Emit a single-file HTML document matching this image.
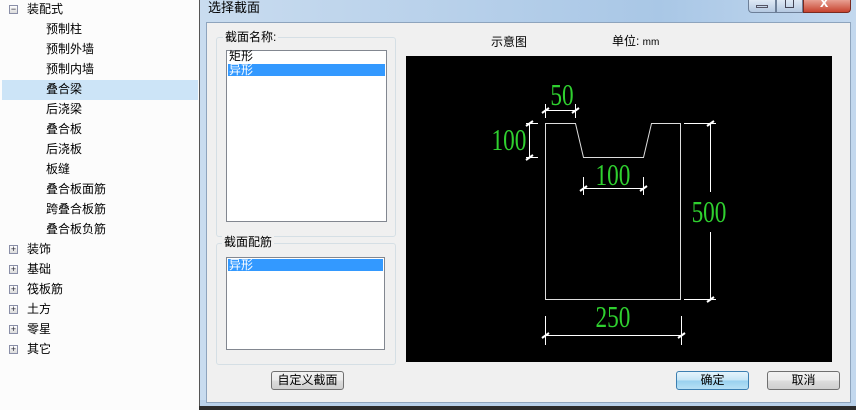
<!DOCTYPE html>
<html><head><meta charset="utf-8"><style>
*{margin:0;padding:0;box-sizing:border-box}
body{width:856px;height:410px;overflow:hidden;background:#fff;font-family:"Liberation Sans","Noto Sans CJK SC",sans-serif;font-size:12px;color:#000;position:relative}
.a{position:absolute}
.t{position:absolute;height:20px;line-height:20px;white-space:nowrap}
.pm{position:absolute;width:9px;height:9px;border:1px solid #8a8fa8;background:linear-gradient(#fff,#dcdcdc);font-size:9px;line-height:7px;text-align:center;color:#223}
.btn{position:absolute;height:19px;border:1px solid #707070;border-radius:3px;background:linear-gradient(#f2f2f2 0,#ebebeb 50%,#dddddd 51%,#cfcfcf);text-align:center;line-height:17px;font-size:12px}
.grp{position:absolute;border:1px solid #d5dfe5;border-radius:3px}
.lbl{position:absolute;background:#f0f0f0;padding:0 2px;line-height:14px}
.lb{position:absolute;background:#fff;border:1px solid #828790}
.sel{background:#3399ff;color:#fff}
.g{fill:#2fd02f;font-family:"Liberation Serif",serif;font-size:31px}
</style></head><body>
<div class="a" style="left:0;top:0;width:199px;height:410px;background:#fcfcfc"></div>
<div class="a" style="left:2px;top:80px;width:196px;height:20px;background:#cce4f7"></div>
<div class="pm" style="left:9px;top:5px">−</div>
<div class="t" style="left:27px;top:-1px">装配式</div>
<div class="t" style="left:46px;top:19px">预制柱</div>
<div class="t" style="left:46px;top:39px">预制外墙</div>
<div class="t" style="left:46px;top:59px">预制内墙</div>
<div class="t" style="left:46px;top:79px">叠合梁</div>
<div class="t" style="left:46px;top:99px">后浇梁</div>
<div class="t" style="left:46px;top:119px">叠合板</div>
<div class="t" style="left:46px;top:139px">后浇板</div>
<div class="t" style="left:46px;top:159px">板缝</div>
<div class="t" style="left:46px;top:179px">叠合板面筋</div>
<div class="t" style="left:46px;top:199px">跨叠合板筋</div>
<div class="t" style="left:46px;top:219px">叠合板负筋</div>
<div class="pm" style="left:9px;top:245px">+</div><div class="t" style="left:27px;top:239px">装饰</div>
<div class="pm" style="left:9px;top:265px">+</div><div class="t" style="left:27px;top:259px">基础</div>
<div class="pm" style="left:9px;top:285px">+</div><div class="t" style="left:27px;top:279px">筏板筋</div>
<div class="pm" style="left:9px;top:305px">+</div><div class="t" style="left:27px;top:299px">土方</div>
<div class="pm" style="left:9px;top:325px">+</div><div class="t" style="left:27px;top:319px">零星</div>
<div class="pm" style="left:9px;top:345px">+</div><div class="t" style="left:27px;top:339px">其它</div>
<div class="a" style="left:199px;top:0;width:657px;height:410px;background:linear-gradient(90deg,#c9dcef,#b7d0ea 40%,#a9c7e6 70%,#c3d8ee);border-left:1px solid #555"></div>
<div class="a" style="left:199px;top:406px;width:657px;height:4px;background:#2b2b2b"></div>
<div class="a" style="left:200px;top:400px;width:656px;height:6px;background:#b9d1ea"></div>
<div class="t" style="left:208px;top:-2px;font-size:13px">选择截面</div>
<div class="a" style="left:748px;top:0;width:28px;height:13px;border:1px solid #6d7f98;border-top:none;border-radius:0 0 0 4px;background:linear-gradient(#dfe9f5,#b5c9e1)"></div>
<div class="a" style="left:776px;top:0;width:27px;height:13px;border:1px solid #6d7f98;border-top:none;background:linear-gradient(#dfe9f5,#b5c9e1)"></div>
<div class="a" style="left:756px;top:5px;width:12px;height:3px;border:1px solid #556"></div>
<div class="a" style="left:785px;top:0;width:9px;height:8px;border:1px solid #445;border-top:none"></div>
<div class="a" style="left:803px;top:0;width:48px;height:13px;border:1px solid #7a2a20;border-top:none;border-radius:0 0 4px 0;background:linear-gradient(#e8a093,#c7432f)"></div>
<div class="a" style="left:820px;top:-6px;color:#fff;font-weight:bold;font-size:15px">x</div>
<div class="a" style="left:206px;top:22px;width:645px;height:381px;background:#f0f0f0;border:1px solid #8ea4bd"></div>
<div class="grp" style="left:216px;top:37px;width:180px;height:200px"></div>
<div class="lbl" style="left:223px;top:30px">截面名称:</div>
<div class="lb" style="left:226px;top:50px;width:161px;height:172px"></div>
<div class="t" style="left:229px;top:50px;height:13px;line-height:13px">矩形</div>
<div class="a sel" style="left:228px;top:64px;width:157px;height:12px;line-height:12px;padding-left:1px">异形</div>
<div class="grp" style="left:216px;top:243px;width:180px;height:122px"></div>
<div class="lbl" style="left:222px;top:235px">截面配筋</div>
<div class="lb" style="left:226px;top:257px;width:159px;height:93px"></div>
<div class="a sel" style="left:228px;top:259px;width:155px;height:12px;line-height:12px;padding-left:1px">异形</div>
<div class="btn" style="left:271px;top:371px;width:73px">自定义截面</div>
<div class="t" style="left:491px;top:32px">示意图</div>
<div class="t" style="left:612px;top:31px">单位: <span style="font-size:10px">mm</span></div>
<div class="btn" style="left:676px;top:371px;width:73px;border-color:#3c7fb1;background:linear-gradient(#e5f4fc,#c4e5f6 50%,#98d1ef 51%,#b7e0f5)">确定</div>
<div class="btn" style="left:767px;top:371px;width:73px">取消</div>
<svg class="a" style="left:406px;top:56px" width="426" height="306" viewBox="406 56 426 306">
<rect x="406" y="56" width="426" height="306" fill="#000"/>
<g stroke="#ddd" stroke-width="1" fill="none">
<path d="M545.5 123.5H575.5L583.5 157.5H643.5L651.5 123.5H680.5V299.5H545.5Z"/>
</g>
<g stroke="#fff" stroke-width="1" fill="none">
<path d="M545.5 110.5H575.5M545.5 104V118M575.5 104V118"/>
<path d="M529.5 123.5V157.5M526 123.5H538M526 157.5H538"/>
<path d="M583.5 188.5H643.5M583.5 177V195M643.5 177V195"/>
<path d="M710.5 123.5V192M710.5 232V299.5M684 123.5H716M684 299.5H716"/>
<path d="M545.5 335.5H681.5M545.5 316V345M681.5 316V345"/>
<path d="M542 113L549 108M572 113L579 108M526 126L533 121M526 160L533 155M580 191L587 186M640 191L647 186M707 126L714 121M707 302L714 297M542 338L549 333M678 338L685 333" stroke-width="2"/>
</g>
<g class="g" text-anchor="middle">
<text x="562" y="105" transform="translate(562 0) scale(0.75 1) translate(-562 0)">50</text>
<text x="509" y="150" transform="translate(509 0) scale(0.75 1) translate(-509 0)">100</text>
<text x="613" y="185" transform="translate(613 0) scale(0.75 1) translate(-613 0)">100</text>
<text x="709" y="222" transform="translate(709 0) scale(0.75 1) translate(-709 0)">500</text>
<text x="613" y="327" transform="translate(613 0) scale(0.75 1) translate(-613 0)">250</text>
</g>
</svg>
</body></html>
